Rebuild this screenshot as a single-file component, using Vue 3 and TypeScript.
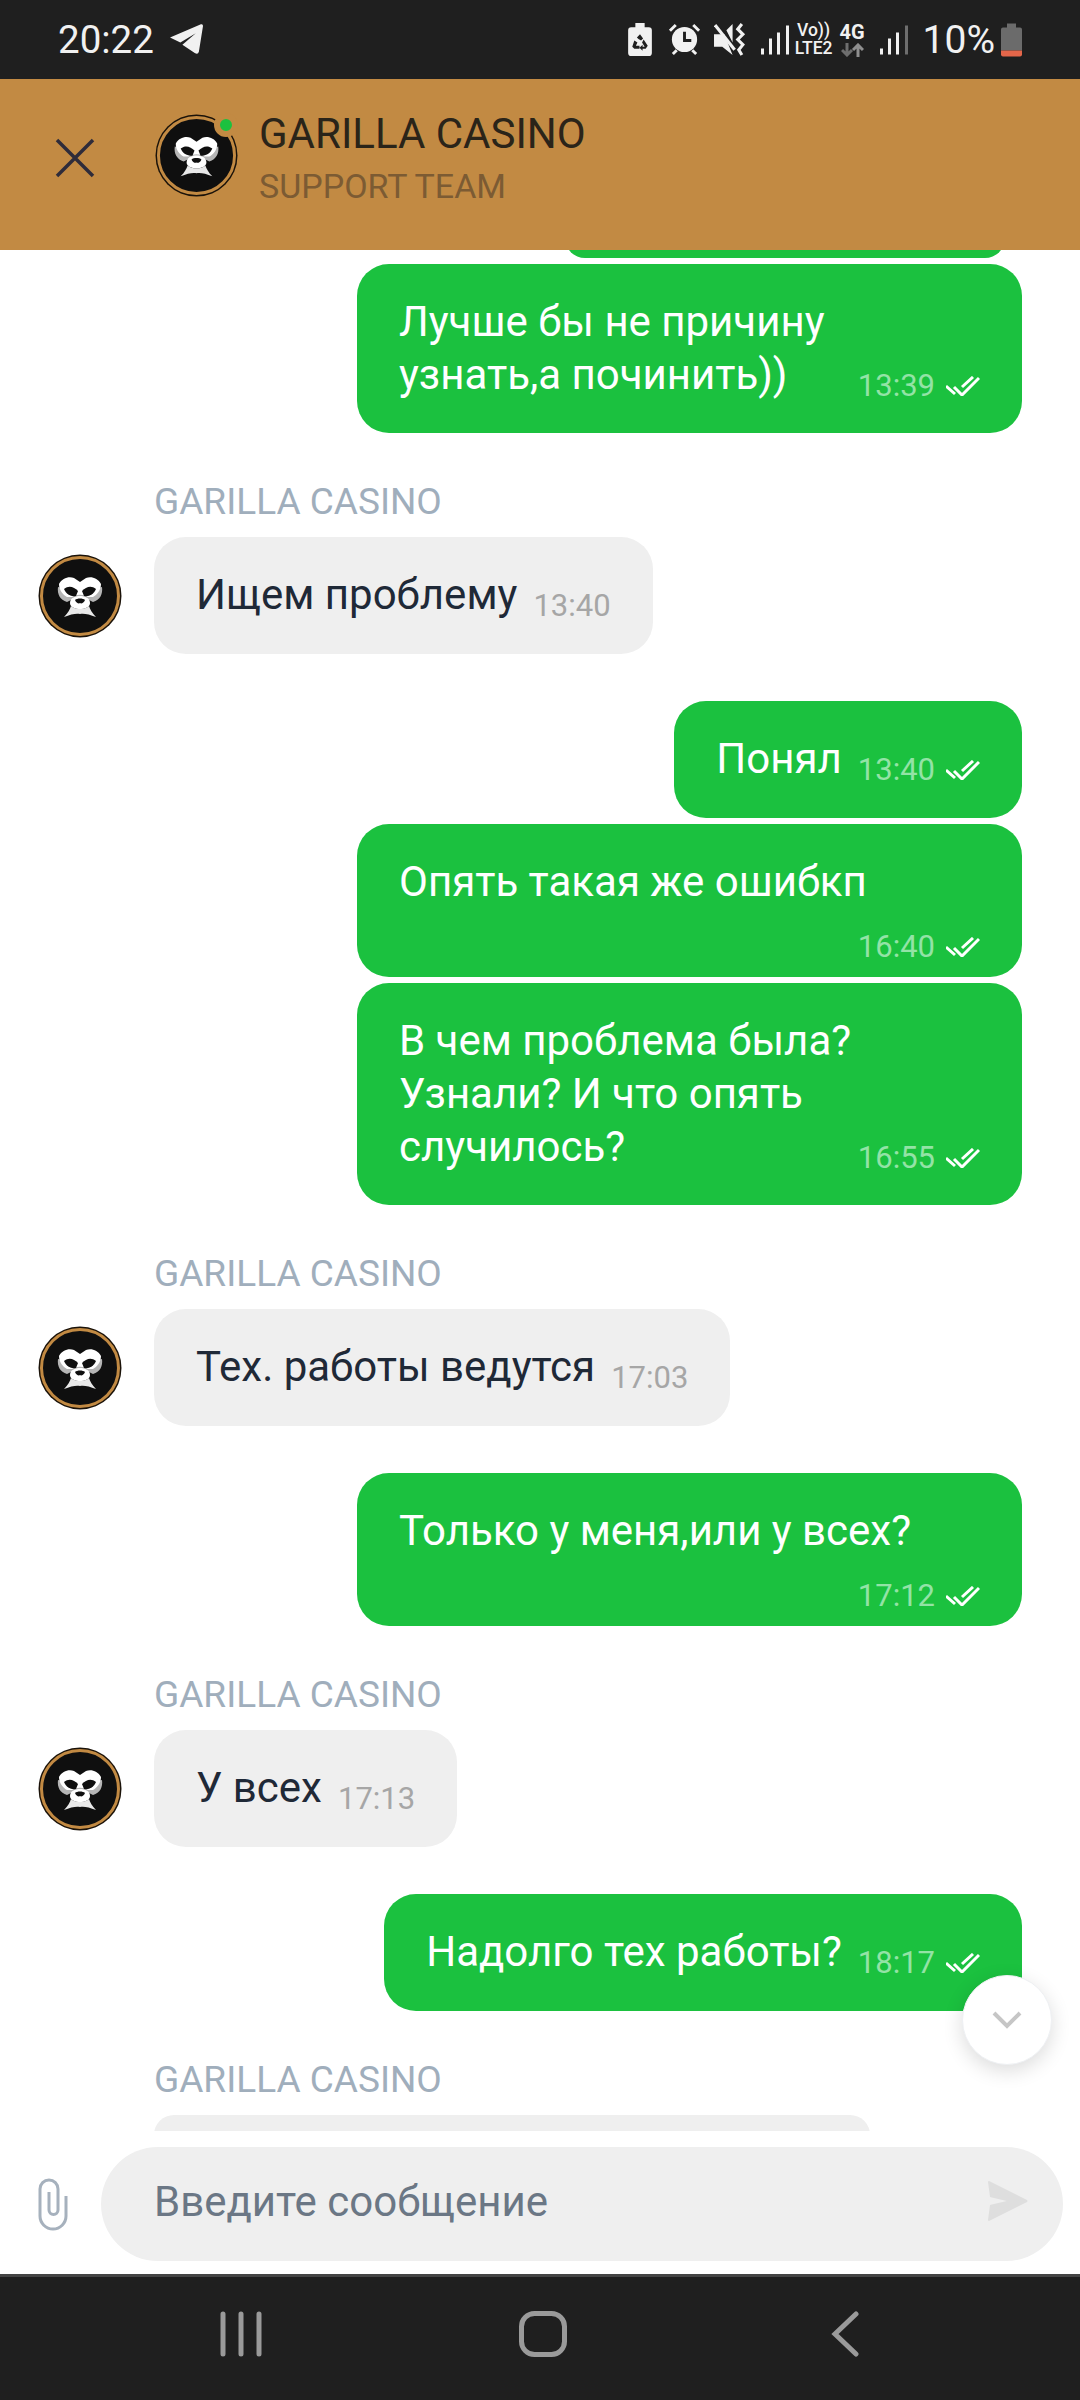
<script setup lang="ts">
type Kind = 'inline' | 'stack' | 'over'

interface Msg {
  id: number
  mine: boolean
  text: string
  time: string
  kind: Kind
  tight?: boolean
}

const agent = 'GARILLA CASINO'

const messages: Msg[] = [
  { id: 1, mine: true, text: 'Лучше бы не причину\nузнать,а починить))', time: '13:39', kind: 'over' },
  { id: 2, mine: false, text: 'Ищем проблему', time: '13:40', kind: 'inline' },
  { id: 3, mine: true, text: 'Понял', time: '13:40', kind: 'inline', tight: true },
  { id: 4, mine: true, text: 'Опять такая же ошибкп', time: '16:40', kind: 'stack', tight: true },
  { id: 5, mine: true, text: 'В чем проблема была?\nУзнали? И что опять\nслучилось?', time: '16:55', kind: 'over' },
  { id: 6, mine: false, text: 'Тех. работы ведутся', time: '17:03', kind: 'inline' },
  { id: 7, mine: true, text: 'Только у меня,или у всех?', time: '17:12', kind: 'stack' },
  { id: 8, mine: false, text: 'У всех', time: '17:13', kind: 'inline' },
  { id: 9, mine: true, text: 'Надолго тех работы?', time: '18:17', kind: 'inline' },
]

const bars = [
  { x: 0, y: 23, h: 6 },
  { x: 8, y: 13, h: 16 },
  { x: 16, y: 7, h: 22 },
  { x: 25, y: 0, h: 29 },
]
</script>

<template>
  <div class="screen">
    <svg class="sprite" width="0" height="0" aria-hidden="true">
      <symbol id="gorilla" viewBox="0 0 84 84">
        <circle cx="42" cy="42" r="41.5" fill="#1a1209" />
        <circle cx="42" cy="42" r="38.5" fill="#0f0f0f" stroke="#c28a43" stroke-width="3" />
        <g transform="translate(42 42)">
          <path fill="#b5b5b5" d="M-22-9C-23-2-20 4-13 6L-9 4 9 4 13 6C20 4 23-2 22-9L0-4Z" />
          <path fill="#fff" d="M-21-12C-18-18-11-20-6-18L0-14 6-18C11-20 18-18 21-12 21-6 17-1 13 1L8 1C5-2-5-2-8 1L-13 1C-17-1-21-6-21-12Z" />
          <path fill="#0f0f0f" d="M-16-7C-11-11-6-9-2-5L-4 0C-9 1-14-2-16-7Z" />
          <path fill="#0f0f0f" d="M16-7C11-11 6-9 2-5L4 0C9 1 14-2 16-7Z" />
          <path fill="#fff" d="M-10 7C-10 2-5 0 0 0S10 2 10 7C10 11 5 13 0 13S-10 11-10 7Z" />
          <path fill="#0f0f0f" d="M-5 4C-3 2 3 2 5 4 4 7 1 8 0 7-1 8-4 7-5 4Z" />
          <path fill="#e8e8e8" d="M-16 21C-12 17-10 13-9 10-5 14 5 14 9 10 10 13 12 17 16 21 9 18 3 17 0 18-3 17-9 18-16 21Z" />
        </g>
      </symbol>
    </svg>

    <div class="status-bar">
      <div class="status-left">
        <span class="clock">20:22</span>
        <svg class="tg" width="34" height="31" viewBox="0 0 33 30">
          <path fill="#f1f1f1" d="M1 13 31 .3Q33-.3 33 2L29 27Q28 30 25 28L13 20 26 9 11 18Z" />
        </svg>
      </div>
      <div class="status-right">
        <svg width="24" height="33" viewBox="0 0 23 32">
          <path fill="#f1f1f1" d="M7 0h9v4h4a3 3 0 0 1 3 3v22a3 3 0 0 1-3 3H3a3 3 0 0 1-3-3V7a3 3 0 0 1 3-3h4Z" />
          <path fill="#1f1f1f" d="M11.500 11 14.500 15 12.500 17 10 15.500 8.500 14ZM6 17l3 2-1.500 3H11v3H6l-2-2ZM15 16l4 6-2 3h-3v2l-3-3 3-3v2h2l-2.500-4Z" />
        </svg>
        <svg class="gap-16" width="33" height="33" viewBox="0 0 34 34">
          <circle cx="17" cy="17" r="13" fill="#f1f1f1" />
          <path d="M17 9v9h7" fill="none" stroke="#1f1f1f" stroke-width="3" />
          <path d="M2 8 8 2M32 8 26 2M5 32l4-4M29 32l-4-4" stroke="#f1f1f1" stroke-width="3" />
        </svg>
        <svg class="gap-13" width="32" height="33" viewBox="0 0 31 32">
          <path fill="#f1f1f1" d="M0 11h6l4 0L18 31 8 23H0ZM12 7 18 1V19Z" />
          <path d="M1 2 20 26" stroke="#f1f1f1" stroke-width="3" />
          <path d="M27 1 23 6 28 11 23 16 28 21 24 26 27 31" fill="none" stroke="#f1f1f1" stroke-width="3" />
        </svg>
        <svg class="gap-15" width="28" height="30" viewBox="0 0 28 29">
          <rect v-for="b in bars" :key="b.x" :x="b.x" :y="b.y" width="3" :height="b.h" fill="#f1f1f1" />
        </svg>
        <div class="volte">
          <span>Vo))</span>
          <span>LTE2</span>
        </div>
        <div class="net">
          <span>4G</span>
          <svg width="23" height="14" viewBox="0 0 23 14">
            <path d="M6 0v11M1 7l5 5 5-5" fill="none" stroke="#6e6e6e" stroke-width="3" />
            <path d="M17 14V3M12 7l5-5 5 5" fill="none" stroke="#8f8f8f" stroke-width="3" />
          </svg>
        </div>
        <svg class="gap-15" width="28" height="30" viewBox="0 0 28 29">
          <rect v-for="b in bars" :key="b.x" :x="b.x" :y="b.y" width="3" :height="b.h" :fill="b.x === 25 ? '#6e6e6e' : '#f1f1f1'" />
        </svg>
        <span class="pct">10%</span>
        <svg class="batt" width="21" height="34" viewBox="0 0 21 33">
          <path fill="#6b6b6b" d="M6 0h9v4h4a2 2 0 0 1 2 2v21H0V6a2 2 0 0 1 2-2h4Z" />
          <path fill="#e4664a" d="M0 27h21v4a2 2 0 0 1-2 2H2a2 2 0 0 1-2-2Z" />
        </svg>
      </div>
    </div>

    <header class="chat-header">
      <svg class="close" width="40" height="40" viewBox="0 0 40 40">
        <path d="M2 2 38 38M38 2 2 38" stroke="#2f2c3a" stroke-width="3.500" />
      </svg>
      <div class="head-avatar">
        <svg width="83" height="83"><use href="#gorilla" /></svg>
        <span class="online"></span>
      </div>
      <div class="head-text">
        <div class="head-title">{{ agent }}</div>
        <div class="head-sub">SUPPORT TEAM</div>
      </div>
    </header>

    <main class="chat">
      <div class="cut-top"></div>
      <template v-for="m in messages" :key="m.id">
        <div v-if="m.mine" class="row-out" :class="{ tight: m.tight }">
          <div class="bubble out" :class="m.kind">
            <div class="txt">{{ m.text }}</div>
            <div class="meta">
              <span class="time">{{ m.time }}</span>
              <svg class="ticks" width="34" height="20" viewBox="0 0 34 20">
                <path d="M0 10 9 18M8 11 16 19 33 2M16 11 27 1" fill="none" stroke="#fff" stroke-width="3" />
              </svg>
            </div>
          </div>
        </div>
        <div v-else class="group">
          <div class="sender">{{ agent }}</div>
          <div class="row-in">
            <svg class="avatar" width="84" height="84"><use href="#gorilla" /></svg>
            <div class="bubble in inline">
              <div class="txt">{{ m.text }}</div>
              <div class="meta"><span class="time">{{ m.time }}</span></div>
            </div>
          </div>
        </div>
      </template>
      <div class="group">
        <div class="sender">{{ agent }}</div>
        <div class="cut-bottom"></div>
      </div>

      <button class="to-bottom" type="button">
        <svg width="30" height="18" viewBox="0 0 30 18">
          <path d="M2 2 15 15 28 2" fill="none" stroke="#c6c6c6" stroke-width="4" />
        </svg>
      </button>
    </main>

    <footer class="composer">
      <svg class="clip" width="30" height="54" viewBox="0 0 30 52">
        <path d="M28 18V38a13 13 0 0 1-26 0V11a9 9 0 0 1 18 0V32a4.500 4.500 0 0 1-9 0V14" fill="none" stroke="#a6b1bd" stroke-width="3" />
      </svg>
      <div class="input">
        <span class="placeholder">Введите сообщение</span>
        <svg width="40" height="40" viewBox="0 0 40 40">
          <path fill="#dedede" d="M1 0 39 19Q40 20 39 21L1 40Q0 40 0 39L2 24 19 20 2 16 0 1Q0 0 1 0Z" />
        </svg>
      </div>
    </footer>

    <nav class="nav-bar">
      <div class="nav-cell">
        <svg width="42" height="46" viewBox="0 0 42 46">
          <path d="M3 3V43M21 3V43M39 3V43" stroke="#9a9a9a" stroke-width="5" stroke-linecap="round" />
        </svg>
      </div>
      <div class="nav-cell">
        <svg width="48" height="46" viewBox="0 0 48 46">
          <rect x="2.500" y="2.500" width="43" height="41" rx="13" fill="none" stroke="#9a9a9a" stroke-width="5" />
        </svg>
      </div>
      <div class="nav-cell">
        <svg width="28" height="46" viewBox="0 0 28 46">
          <path d="M25 3 4 23 25 43" fill="none" stroke="#9a9a9a" stroke-width="5" stroke-linecap="round" />
        </svg>
      </div>
    </nav>
  </div>
</template>

<style scoped>
.screen {
  width: 1080px;
  height: 2400px;
  display: flex;
  flex-direction: column;
  overflow: hidden;
  background: #fff;
  font-family: Roboto, "Noto Sans", sans-serif;
}
.sprite {
  position: absolute;
}

.status-bar {
  height: 79px;
  flex: none;
  background: #1f1f1f;
  color: #f1f1f1;
  display: flex;
  align-items: center;
  justify-content: space-between;
  padding: 0 58px;
}
.status-left,
.status-right {
  display: flex;
  align-items: center;
}
.clock {
  font-size: 38.500px;
  margin-right: 15px;
}
.gap-16 {
  margin-left: 16px;
}
.gap-13 {
  margin-left: 13px;
}
.gap-15 {
  margin-left: 15px;
}
.volte {
  margin-left: 6px;
  display: flex;
  flex-direction: column;
  align-items: center;
  gap: 1px;
  font-size: 17.500px;
  line-height: 17px;
  font-weight: 500;
}
.volte span {
  display: block;
  height: 17px;
}
.net {
  margin-left: 7px;
  display: flex;
  flex-direction: column;
  align-items: center;
  font-size: 20px;
  line-height: 18px;
  font-weight: 700;
  gap: 2px;
}
.pct {
  font-size: 39px;
  margin-left: 15px;
}
.batt {
  margin-left: 6px;
}

.chat-header {
  height: 171px;
  flex: none;
  background: #c28a43;
  display: flex;
  align-items: center;
  padding-left: 55px;
  padding-bottom: 19px;
  box-sizing: border-box;
}
.close {
  margin-top: 6px;
}
.head-avatar {
  position: relative;
  width: 83px;
  height: 83px;
  margin-left: 60px;
}
.online {
  position: absolute;
  left: 59px;
  top: -1px;
  width: 12px;
  height: 12px;
  border-radius: 50%;
  background: #1cc13f;
  border: 6px solid #c28a43;
}
.head-text {
  margin-left: 21px;
  margin-top: 10px;
}
.head-title {
  font-size: 42px;
  line-height: 53px;
  color: #2a2419;
}
.head-sub {
  font-size: 34px;
  line-height: 53px;
  color: #7c5b33;
}

.chat {
  position: relative;
  flex: 1;
  min-height: 0;
  overflow: hidden;
}
.cut-top {
  width: 440px;
  height: 40px;
  margin: -32px 0 6px 565px;
  background: #1bc13f;
  border-radius: 32px;
}
.row-out {
  display: flex;
  justify-content: flex-end;
  padding-right: 58px;
  margin-bottom: 47px;
}
.row-out.tight {
  margin-bottom: 6px;
}
.group {
  margin-bottom: 47px;
}
.sender {
  height: 44px;
  line-height: 44px;
  padding-left: 154px;
  margin-bottom: 13px;
  font-size: 37px;
  color: #a0aebc;
}
.row-in {
  display: flex;
  align-items: center;
  padding-left: 38px;
  gap: 32px;
}
.avatar {
  flex: none;
}
.bubble {
  box-sizing: border-box;
  padding: 31px 42px 33px;
  border-radius: 32px;
  font-size: 42px;
  line-height: 53px;
}
.bubble.inline {
  display: flex;
  align-items: flex-end;
  gap: 16px;
}
.bubble.stack,
.bubble.over {
  width: 665px;
}
.bubble.stack {
  padding-bottom: 15px;
}
.bubble.over {
  padding-bottom: 32px;
}
.out {
  background: #1bc13f;
  color: #fff;
}
.in {
  background: #efefef;
  color: #1f2937;
}
.txt {
  white-space: pre-line;
}
.meta {
  height: 30px;
  display: flex;
  align-items: center;
  justify-content: flex-end;
  gap: 11px;
  flex: none;
}
.stack .meta {
  margin-top: 24px;
}
.over .meta {
  margin-top: -30px;
}
.time {
  font-size: 31px;
  line-height: 30px;
}
.out .time {
  color: #93e3a6;
}
.in .time {
  color: #a6a6a6;
}

.cut-bottom {
  width: 716px;
  height: 40px;
  margin-left: 154px;
  background: #efefef;
  border-radius: 32px;
}
.to-bottom {
  position: absolute;
  right: 28px;
  bottom: 66px;
  width: 90px;
  height: 90px;
  padding: 0;
  border: 1px solid #eef0f3;
  border-radius: 50%;
  background: #fff;
  box-shadow: 0 6px 20px rgba(0, 0, 0, 0.14);
  display: flex;
  align-items: center;
  justify-content: center;
}

.composer {
  height: 143px;
  flex: none;
  box-sizing: border-box;
  padding: 16px 17px 13px 38px;
  display: flex;
  align-items: center;
  background: #fff;
}
.clip {
  flex: none;
  margin-right: 33px;
}
.input {
  flex: 1;
  height: 114px;
  box-sizing: border-box;
  border-radius: 57px;
  background: #efefef;
  display: flex;
  align-items: center;
  justify-content: space-between;
  padding: 0 35px 6px 53px;
}
.placeholder {
  font-size: 42px;
  color: #6b7785;
}

.nav-bar {
  height: 126px;
  flex: none;
  box-sizing: border-box;
  background: #1f1f1f;
  border-top: 3px solid #444;
  display: grid;
  grid-template-columns: repeat(3, 302px);
  padding: 34px 0 0 90px;
}
.nav-cell {
  display: flex;
  justify-content: center;
  align-items: flex-start;
}
</style>

<style>
html,
body {
  background: #fff;
}
</style>
